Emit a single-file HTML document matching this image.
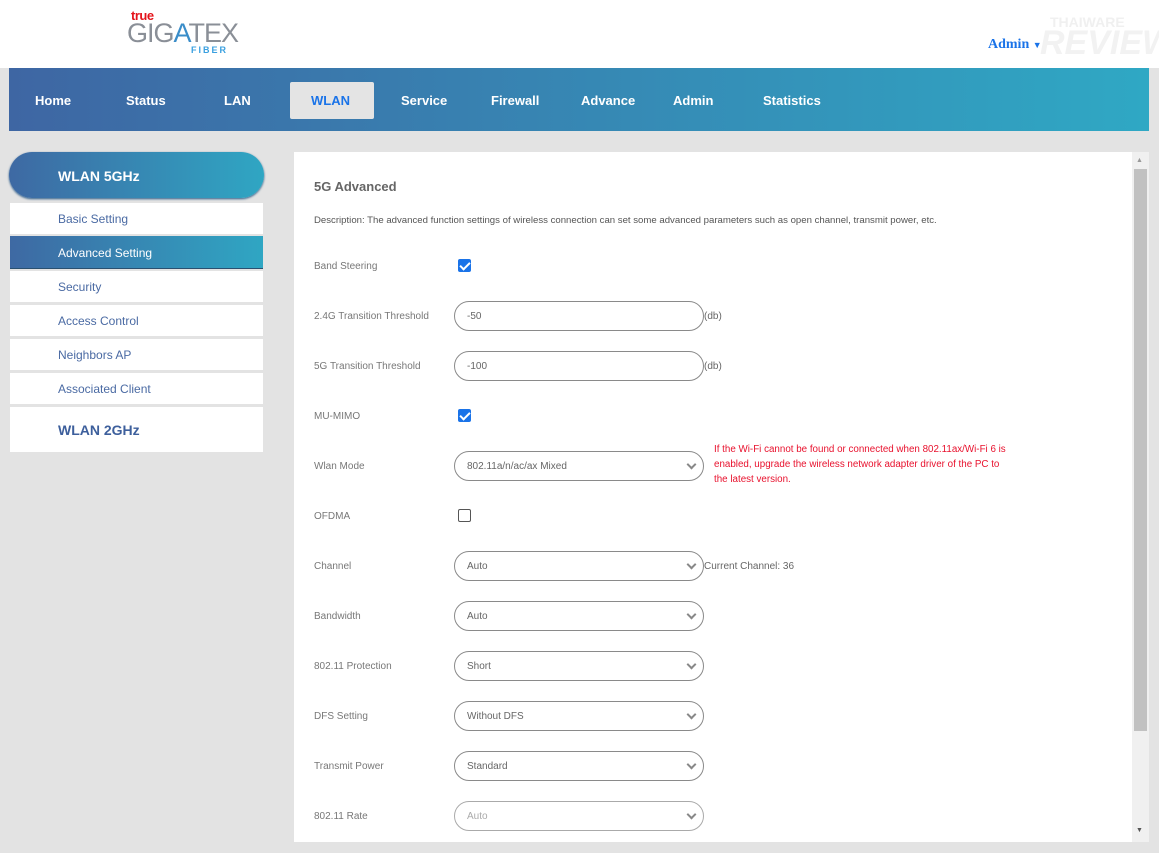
<!DOCTYPE html>
<html><head><meta charset="utf-8"><style>
*{margin:0;padding:0;box-sizing:border-box}
body{width:1159px;height:853px;background:#e3e3e3;font-family:"Liberation Sans",sans-serif;position:relative;overflow:hidden}
.top{position:absolute;left:0;top:0;width:1159px;height:68px;background:#fff}
.nav{position:absolute;left:9px;top:68px;width:1140px;height:63px;background:linear-gradient(90deg,#3e66a3,#2fa8c4)}
.nav span{position:absolute;top:25px;color:#fff;font-weight:bold;font-size:13px}
.act{position:absolute;left:281px;top:14px;width:84px;height:37px;background:#e4e4e4;border-radius:2px}
.side{position:absolute;left:10px;width:253px;background:#fff;color:#4a6aa3;font-size:12px;padding-left:48px}
.pill{position:absolute;left:9px;top:152px;width:255px;height:46px;border-radius:23px;background:linear-gradient(90deg,#3e69a3,#2fa6c3);color:#fff;font-weight:bold;font-size:14px;padding:16px 0 0 49px;box-shadow:0 1px 2px #2a5a86}
.panel{position:absolute;left:294px;top:152px;width:855px;height:690px;background:#fff}
.lbl{position:absolute;left:314px;font-size:10px;color:#777}
.in{position:absolute;left:454px;width:250px;height:30px;border:1px solid #8a8a8a;border-radius:15px;font-size:10px;color:#666;padding:9px 0 0 12px}
.in.s::after{content:"";position:absolute;right:8px;top:9px;width:5px;height:5px;border-right:2px solid #888;border-bottom:2px solid #888;transform:rotate(45deg)}
.cb{position:absolute;left:458px;width:13px;height:13px;border-radius:2px}
.on{background:#1a73e8}
.on::after{content:"";position:absolute;left:4px;top:1px;width:4px;height:8px;border-right:2px solid #fff;border-bottom:2px solid #fff;transform:rotate(45deg)}
.off{border:1px solid #555;background:#fff}
.note{position:absolute;font-size:10px;color:#666}
</style></head><body>
<div class="top">
<div style="position:absolute;left:131px;top:8px;color:#e4141b;font-weight:bold;font-size:13px;letter-spacing:-0.5px">true</div>
<div style="position:absolute;left:127px;top:18px;font-size:27px;color:#8a8f97;letter-spacing:-1px">GIG<span style="color:#3a8dc9">A</span>TEX</div>
<div style="position:absolute;left:191px;top:45px;font-size:9px;color:#3aa0e0;font-weight:bold;letter-spacing:2px">FIBER</div>
<div style="position:absolute;left:1050px;top:14px;color:#f0f0f0;font-size:14px;font-weight:bold">THAIWARE</div>
<div style="position:absolute;left:1040px;top:24px;color:#f2f2f2;font-size:34px;font-weight:bold;font-style:italic">REVIEW</div>
<div style="position:absolute;left:988px;top:37px;color:#1a73e8;font-weight:bold;font-size:14px;font-family:'Liberation Serif',serif">Admin <span style="font-size:9px">▼</span></div>
</div>
<div class="nav"><div class="act"></div>
<span style="left:26px">Home</span><span style="left:117px">Status</span><span style="left:215px">LAN</span><span style="left:302px;color:#1a73e8">WLAN</span><span style="left:392px">Service</span><span style="left:482px">Firewall</span><span style="left:572px">Advance</span><span style="left:664px">Admin</span><span style="left:754px">Statistics</span></div>
<div class="pill">WLAN 5GHz</div>
<div class="side" style="top:203px;height:31px;padding-top:9px">Basic Setting</div>
<div class="side" style="top:236px;height:33px;padding-top:10px;background:linear-gradient(90deg,#3e69a3,#2fa6c3);color:#fff;border-bottom:1px solid #2a5070">Advanced Setting</div>
<div class="side" style="top:271px;height:31px;padding-top:9px">Security</div>
<div class="side" style="top:305px;height:31px;padding-top:9px">Access Control</div>
<div class="side" style="top:339px;height:31px;padding-top:9px">Neighbors AP</div>
<div class="side" style="top:373px;height:31px;padding-top:9px">Associated Client</div>
<div class="side" style="top:407px;height:45px;padding-top:15px;font-weight:bold;font-size:14px;color:#3d5f9c">WLAN 2GHz</div>
<div class="panel"></div>
<div style="position:absolute;left:1132px;top:152px;width:17px;height:690px;background:#f0f0f0"></div>
<div style="position:absolute;left:1134px;top:169px;width:13px;height:562px;background:#c1c1c1"></div>
<div style="position:absolute;left:1136px;top:157px;font-size:7px;color:#999">▲</div>
<div style="position:absolute;left:1136px;top:827px;font-size:7px;color:#555">▼</div>
<div style="position:absolute;left:314px;top:179px;font-size:13px;font-weight:bold;color:#666">5G Advanced</div>
<div style="position:absolute;left:314px;top:215px;font-size:9.6px;color:#555">Description: The advanced function settings of wireless connection can set some advanced parameters such as open channel, transmit power, etc.</div>
<div class="lbl" style="top:261px">Band Steering</div><div class="cb on" style="top:259px"></div>
<div class="lbl" style="top:311px">2.4G Transition Threshold</div><div class="in" style="top:301px">-50</div><div class="note" style="left:704px;top:311px">(db)</div>
<div class="lbl" style="top:361px">5G Transition Threshold</div><div class="in" style="top:351px">-100</div><div class="note" style="left:704px;top:361px">(db)</div>
<div class="lbl" style="top:411px">MU-MIMO</div><div class="cb on" style="top:409px"></div>
<div class="lbl" style="top:461px">Wlan Mode</div><div class="in s" style="top:451px">802.11a/n/ac/ax Mixed</div>
<div style="position:absolute;left:714px;top:442px;font-size:9.8px;line-height:15px;color:#e8112d;width:300px">If the Wi-Fi cannot be found or connected when 802.11ax/Wi-Fi 6 is enabled, upgrade the wireless network adapter driver of the PC to the latest version.</div>
<div class="lbl" style="top:511px">OFDMA</div><div class="cb off" style="top:509px"></div>
<div class="lbl" style="top:561px">Channel</div><div class="in s" style="top:551px">Auto</div><div class="note" style="left:704px;top:561px">Current Channel: 36</div>
<div class="lbl" style="top:611px">Bandwidth</div><div class="in s" style="top:601px">Auto</div>
<div class="lbl" style="top:661px">802.11 Protection</div><div class="in s" style="top:651px">Short</div>
<div class="lbl" style="top:711px">DFS Setting</div><div class="in s" style="top:701px">Without DFS</div>
<div class="lbl" style="top:761px">Transmit Power</div><div class="in s" style="top:751px">Standard</div>
<div class="lbl" style="top:811px">802.11 Rate</div><div class="in s" style="top:801px;color:#aaa;border-color:#aaa">Auto</div>
</body></html>
